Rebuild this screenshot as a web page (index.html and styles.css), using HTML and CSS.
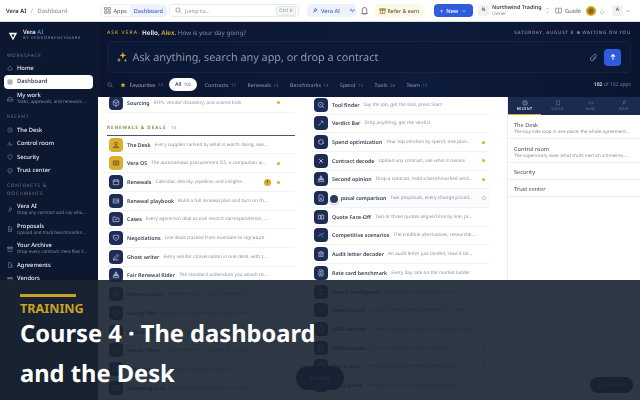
FILE: index.html
```html
<!DOCTYPE html>
<html lang="en">
<head>
<meta charset="utf-8">
<title>Vera AI Dashboard</title>
<link rel="stylesheet" href="styles.css">
</head>
<body>
<div class="app">
  <header class="topbar">
    <div class="crumbs"><b>Vera AI</b><i>/</i><span>Dashboard</span></div>
    <div class="seg">
      <span class="seg-item"><svg class="ic7" viewBox="0 0 12 12"><path d="M1 1h4v4H1zM7 1h4v4H7zM1 7h4v4H1zM7 7h4v4H7z" fill="none" stroke="#777" stroke-width="1.2"/></svg>Apps</span>
      <span class="seg-item on">Dashboard</span>
    </div>
    <div class="search"><svg class="ic7" viewBox="0 0 12 12"><circle cx="5" cy="5" r="3.6" fill="none" stroke="#777" stroke-width="1.1"/><path d="M8 8l3 3" stroke="#777" stroke-width="1.1"/></svg><span class="grow">Jump to...</span><kbd>Ctrl K</kbd></div>
    <div class="vera-pill"><svg class="ic7" viewBox="0 0 12 12"><path d="M2 10l4-4M6 2l1 2 2 1-2 1-1 2-1-2-2-1 2-1z" fill="none" stroke="#4a62cf" stroke-width="1.2"/></svg><span>Vera AI</span><svg class="ic7 pad" viewBox="0 0 12 12"><path d="M1 6h2l1-3 2 6 2-5 1 2h2" fill="none" stroke="#6b82dd" stroke-width="1.3"/></svg></div>
    <svg class="bell" viewBox="0 0 12 12"><path d="M3 9V5a3 3 0 0 1 6 0v4l1 1H2zM5 11h2" fill="none" stroke="#555" stroke-width="1"/></svg>
    <div class="refer"><svg class="ic7" viewBox="0 0 12 12"><path d="M2 5h8v6H2zM1 3h10v2H1zM6 3v8" fill="none" stroke="#9a7414" stroke-width="1.2"/></svg>Refer &amp; earn</div>
    <div class="new"><span>+</span>New<svg class="chev" viewBox="0 0 8 8"><path d="M2 3l2 2 2-2" fill="none" stroke="#cfdaff" stroke-width="1"/></svg></div>
    <span class="sq">N</span>
    <div class="org"><b>Northwind Trading</b><span>Owner</span></div>
    <svg class="updown" viewBox="0 0 8 12"><path d="M2 4l2-2 2 2M2 8l2 2 2-2" fill="none" stroke="#888" stroke-width="1"/></svg>
    <div class="guide"><svg class="ic7" viewBox="0 0 12 12"><path d="M1 2h4l1 1 1-1h4v8H7l-1 1-1-1H1zM6 3v7" fill="none" stroke="#666" stroke-width="1"/></svg>Guide</div>
    <span class="coin"></span>
    <svg class="hand" viewBox="0 0 12 12"><path d="M6 1v6M3 6a3.5 3.5 0 1 0 6 0" fill="none" stroke="#999" stroke-width="1"/></svg>
    <span class="sq a">A</span>
    <svg class="chev end" viewBox="0 0 8 8"><path d="M2 3l2 2 2-2" fill="none" stroke="#888" stroke-width="1"/></svg>
  </header>

  <div class="shell">
    <aside class="sidebar">
      <div class="brand">
        <svg class="logo" viewBox="0 0 12 12"><path d="M1 2h10L6 11z M4 4.2L6 8l2-3.8z" fill="#fff" fill-rule="evenodd"/></svg>
        <div><div class="brand-name">Vera <em>AI</em></div><div class="brand-sub">BY VENDORBENCHMARK</div></div>
      </div>
      <div class="sec first">WORKSPACE</div>
      <div class="nav"><svg viewBox="0 0 12 12"><path d="M2 6l4-4 4 4v4H2z"/></svg><b>Home</b></div>
      <div class="nav active"><svg viewBox="0 0 12 12"><path d="M2 2h8v8H2zM2 6h8M6 2v8"/></svg><b>Dashboard</b></div>
      <div class="nav two"><svg viewBox="0 0 12 12"><path d="M1 7l2-4h6l2 4v3H1zM1 7h3l1 1h2l1-1h3"/></svg><div><b>My work</b><small>Tasks, approvals, and renewals ...</small></div></div>
      <div class="sec">RECENT</div>
      <div class="nav"><svg viewBox="0 0 12 12"><circle cx="6" cy="6" r="4.5"/><path d="M6 3v3l2 1"/></svg><b>The Desk</b></div>
      <div class="nav"><svg viewBox="0 0 12 12"><path d="M1 7h2l2-5 2 8 2-4h2"/></svg><b>Control room</b></div>
      <div class="nav"><svg viewBox="0 0 12 12"><path d="M6 1l4 2v3c0 2.500-2 4-4 5-2-1-4-2.500-4-5V3z"/></svg><b>Security</b></div>
      <div class="nav"><svg viewBox="0 0 12 12"><path d="M6 1l4 2v3c0 2.500-2 4-4 5-2-1-4-2.500-4-5V3zM4 6l1.500 1.500L8 5"/></svg><b>Trust center</b></div>
      <div class="sec wrap">CONTRACTS &amp; DOCUMENTS</div>
      <div class="nav two"><svg viewBox="0 0 12 12"><path d="M2 10l4-4M7 1l1 2 2 1-2 1-1 2-1-2-2-1 2-1z"/></svg><div><b>Vera AI</b><small>Drop any contract and say wha...</small></div></div>
      <div class="nav two"><svg viewBox="0 0 12 12"><path d="M3 1h4l2 2v8H3zM4.500 6h3M4.500 8h3"/></svg><div><b>Proposals</b><small>Upload and track benchmarkin...</small></div></div>
      <div class="nav two"><svg viewBox="0 0 12 12"><path d="M1 2h10v2H1zM2 4v7h8V4zM5 6h2"/></svg><div><b>Your Archive</b><small>Drop every contract: Vera files t...</small></div></div>
      <div class="nav"><svg viewBox="0 0 12 12"><path d="M3 1h4l2 2v8H3zM7 6h3v5"/></svg><b>Agreements</b></div>
      <div class="nav"><svg viewBox="0 0 12 12"><path d="M2 5h8v6H2zM1 3h10v2H1z"/></svg><b>Vendors</b></div>
    </aside>

    <main class="main">
      <section class="hero">
        <div class="hero-top">
          <span class="ask-label">ASK VERA</span>
          <span class="hello"><b>Hello, <em>Alex.</em></b> How is your day going?</span>
          <span class="date">SATURDAY, AUGUST 8 &nbsp;<i></i> WAITING ON YOU</span>
        </div>
        <div class="prompt">
          <svg class="spark" viewBox="0 0 14 14"><path d="M8 1l1 3 3 1-3 1-1 3-1-3-3-1 3-1zM3.500 8l.7 1.800L6 10.500l-1.800.7L3.500 13l-.7-1.800L1 10.500l1.800-.7zM11 9l.5 1.500L13 11l-1.500.5L11 13l-.5-1.500L9 11l1.500-.5z" fill="#e0b12e"/></svg>
          <span class="prompt-text">Ask anything, search any app, or drop a contract</span>
          <svg class="clip" viewBox="0 0 12 12"><path d="M10 5.500L5.800 9.700a2.300 2.300 0 0 1-3.300-3.300l4.400-4.400a1.500 1.500 0 0 1 2.200 2.200L4.800 8.400" fill="none" stroke="#7d8698" stroke-width="1.200"/></svg>
          <span class="send"><svg viewBox="0 0 10 10"><path d="M5 8.500V2M2.500 4.500L5 2l2.500 2.500" fill="none" stroke="#fff" stroke-width="1.300"/></svg></span>
        </div>
        <div class="tabs">
          <svg class="tab-search" viewBox="0 0 12 12"><circle cx="5" cy="5" r="3.600" fill="none" stroke="#8994a8" stroke-width="1"/><path d="M8 8l3 3" stroke="#8994a8"/></svg>
          <span class="tab fav"><svg viewBox="0 0 12 12"><path d="M6 1l1.500 3.300 3.500.4-2.600 2.400.7 3.500L6 8.900l-3.100 1.700.7-3.500L1 4.700l3.500-.4z" fill="#dcae2c"/></svg>Favourites <sup>24</sup></span>
          <span class="tab all">All <sup>102</sup></span>
          <span class="tab">Contracts <sup>17</sup></span>
          <span class="tab">Renewals <sup>14</sup></span>
          <span class="tab">Benchmarks <sup>14</sup></span>
          <span class="tab">Spend <sup>14</sup></span>
          <span class="tab">Tools <sup>28</sup></span>
          <span class="tab">Team <sup>15</sup></span>
          <span class="count"><b>102</b> of 102 apps</span>
        </div>
      </section>

      <section class="content">
        <div class="col col-a">
          <div class="row"><span class="ico"><svg viewBox="0 0 12 12"><path d="M6 1l4 2.500v5L6 11 2 8.500v-5zM2 3.500L6 6l4-2.500M6 6v5"/></svg></span><b>Sourcing</b><span class="d">RFPs, vendor discovery, and scored bids</span><span class="dot"></span></div>
          <div class="group"><span>RENEWALS &amp; DEALS</span><small>14</small></div>
          <div class="row"><span class="ico gold"><svg viewBox="0 0 12 12"><circle cx="6" cy="4" r="2"/><path d="M2 10c0-3 8-3 8 0z"/></svg></span><b>The Desk</b><span class="d">Every supplier ranked by what is worth doing, wor...</span></div>
          <div class="row"><span class="ico gold"><svg viewBox="0 0 12 12"><path d="M2 3h8v6H2z"/><circle cx="6" cy="6" r="1.500"/></svg></span><b>Vera OS</b><span class="d">The autonomous procurement OS, a companion w...</span><span class="dot"></span></div>
          <div class="row"><span class="ico"><svg viewBox="0 0 12 12"><path d="M2 3h8v7H2zM2 5h8M4 1.500V3M8 1.500V3"/></svg></span><b>Renewals</b><span class="d">Calendar, density, pipeline, and insights</span><span class="badge">1</span><span class="dot"></span></div>
          <div class="row"><span class="ico"><svg viewBox="0 0 12 12"><path d="M2 3h8v6H2zM2 6h8M8 4.500L9.500 6"/></svg></span><b>Renewal playbook</b><span class="d">Build a full renewal plan and turn on th...</span></div>
          <div class="row"><span class="ico"><svg viewBox="0 0 12 12"><path d="M1.500 3h3.500l1 1.500h4.500V10h-9zM4 7h4"/></svg></span><b>Cases</b><span class="d">Every agent-run deal as one record: correspondence, ...</span></div>
          <div class="row"><span class="ico"><svg viewBox="0 0 12 12"><path d="M2 2h8v5l-4 3-4-3zM4 5l2 1.500L8 5"/></svg></span><b>Negotiations</b><span class="d">Live deals tracked from mandate to signature</span></div>
          <div class="row"><span class="ico"><svg viewBox="0 0 12 12"><path d="M2 10l1-3 5-5 2 2-5 5zM2 10.500h8"/></svg></span><b>Ghost writer</b><span class="d">Every vendor conversation in one desk, with t...</span></div>
          <div class="row"><span class="ico"><svg viewBox="0 0 12 12"><path d="M5 1.500h2V5H5zM3 5h6v2H3zM2 7h8v3H2z"/></svg></span><b>Fair Renewal Rider</b><span class="d">The standard addendum you attach to ...</span></div>
          <div class="row"><span class="ico"><svg viewBox="0 0 12 12"><path d="M2 3h8v6H2zM2 6h8"/></svg></span><b>Renegotiation</b><span class="d">Pick the contracts worth reopening</span></div>
          <div class="row"><span class="ico"><svg viewBox="0 0 12 12"><circle cx="6" cy="6" r="4"/></svg></span><b>Saving Plan</b><span class="d">Savings targets by vendor and by quarter</span></div>
          <div class="row"><span class="ico"><svg viewBox="0 0 12 12"><path d="M2 3h8v6H2z"/></svg></span><b>Walk-away</b><span class="d">Know your alternatives before you sit down</span></div>
          <div class="row"><span class="ico"><svg viewBox="0 0 12 12"><circle cx="6" cy="6" r="4"/></svg></span><b>Vendor Town</b><span class="d">Vendors and their standing at a glance</span></div>
          <div class="row"><span class="ico"><svg viewBox="0 0 12 12"><path d="M2 3h8v6H2z"/></svg></span><b>Price lock</b><span class="d">Caps and uplifts on every renewal</span></div>
          <div class="row"><span class="ico"><svg viewBox="0 0 12 12"><path d="M2 3h8v6H2z"/></svg></span><b>Renewing soon</b><span class="d">Everything that closes in ninety days</span></div>
        </div>

        <div class="col col-b">
          <div class="row"><span class="ico"><svg viewBox="0 0 12 12"><circle cx="5.500" cy="5.500" r="3.500"/><path d="M8 8l2.500 2.500M4.500 5.500h2"/></svg></span><b>Tool finder</b><span class="d">Say the job, get the tool, press Start</span></div>
          <div class="row"><span class="ico"><svg viewBox="0 0 12 12"><path d="M2 10l4.500-4.500M6 3l3 3M7 2l3 3"/></svg></span><b>Verdict Bar</b><span class="d">Drop anything, get the verdict</span></div>
          <div class="row"><span class="ico"><svg viewBox="0 0 12 12"><path d="M2.500 6a3.500 3.500 0 1 1 7 0 3.500 3.500 0 0 1-7 0zM1.500 4l2 .5M10.500 8l-2-.5"/></svg></span><b>Spend optimization</b><span class="d">Your top vendors by spend, one plan...</span><span class="dot"></span></div>
          <div class="row"><span class="ico"><svg viewBox="0 0 12 12"><path d="M3 3l6 6M9 3L3 9"/><circle cx="6" cy="6" r="1"/></svg></span><b>Contract decode</b><span class="d">Upload any contract, see what it means</span><span class="dot"></span></div>
          <div class="row"><span class="ico"><svg viewBox="0 0 12 12"><path d="M5 1.500h2V5H5zM3 5h6v2H3zM2 7h8v3H2z"/></svg></span><b>Second opinion</b><span class="d">Drop a contract, hold a benchmarked verd...</span><span class="dot"></span></div>
          <div class="row hover"><span class="ico"><svg viewBox="0 0 12 12"><path d="M3 1.500h4.500L9.500 3.500V10.500H3zM4.500 6h3M4.500 8h3"/></svg></span><b><span class="mask">Pro</span>posal comparison</b><span class="d">Two proposals, every change priced...</span><svg class="star" viewBox="0 0 12 12"><path d="M6 1.500l1.400 3 3.100.4-2.300 2.100.6 3.100L6 8.600l-2.800 1.500.6-3.100L1.500 4.900l3.100-.4z" fill="none" stroke="#98a0ad" stroke-width=".9"/></svg><span class="cursor"></span></div>
          <div class="row"><span class="ico"><svg viewBox="0 0 12 12"><path d="M2 3h3.500v6H2zM6.500 3H10v6H6.500z"/></svg></span><b>Quote Face-Off</b><span class="d">Two or three quotes aligned line by line, pl...</span></div>
          <div class="row"><span class="ico"><svg viewBox="0 0 12 12"><path d="M2 8l2.500-2.500M5.500 6l2 0M7.500 5L10 3M4 3l1 1M8 8l1 1"/></svg></span><b>Competitive scenarios</b><span class="d">The credible alternatives, researche...</span></div>
          <div class="row"><span class="ico"><svg viewBox="0 0 12 12"><path d="M6 2l4 2.500H2zM3 5v4M6 5v4M9 5v4M2 9.500h8"/></svg></span><b>Audit letter decoder</b><span class="d">An audit letter just landed, read it be...</span></div>
          <div class="row"><span class="ico"><svg viewBox="0 0 12 12"><path d="M3 1.500h6v9H3zM4.500 4h3M4.500 6h3M4.500 8h3"/></svg></span><b>Rate card benchmark</b><span class="d">Every day rate on the market ladder</span></div>
          <div class="row"><span class="ico"><svg viewBox="0 0 12 12"><path d="M6 1.500v9M3 4l3-2.500L9 4M3 8l3 2.500L9 8"/></svg></span><b>Spend Intelligence</b><span class="d">Search and slice all of your spend</span></div>
          <div class="row"><span class="ico"><svg viewBox="0 0 12 12"><path d="M2 6l3 3 5-6"/></svg></span><b>Speed Check</b><span class="d">A quick first read of any quote or order form</span></div>
          <div class="row"><span class="ico"><svg viewBox="0 0 12 12"><path d="M3 1.500h6v9H3z"/></svg></span><b>SOW Decoder</b><span class="d">Scope, rates and risks of any statement of work</span><svg class="star" viewBox="0 0 12 12"><path d="M6 1.500l1.400 3 3.100.4-2.300 2.100.6 3.100L6 8.600l-2.800 1.500.6-3.100L1.500 4.900l3.100-.4z" fill="none" stroke="#98a0ad" stroke-width=".9"/></svg></div>
          <div class="row"><span class="ico"><svg viewBox="0 0 12 12"><path d="M3 1.500h6v9H3z"/></svg></span><b>MSA Decoder</b><span class="d">Clauses that matter, in plain words</span><svg class="star" viewBox="0 0 12 12"><path d="M6 1.500l1.400 3 3.100.4-2.300 2.100.6 3.100L6 8.600l-2.800 1.500.6-3.100L1.500 4.900l3.100-.4z" fill="none" stroke="#98a0ad" stroke-width=".9"/></svg></div>
          <div class="row"><span class="ico"><svg viewBox="0 0 12 12"><circle cx="6" cy="6" r="4"/></svg></span><b>Quick scan</b><span class="d">Drop a contract and see the flagged clauses</span><svg class="star" viewBox="0 0 12 12"><path d="M6 1.500l1.400 3 3.100.4-2.300 2.100.6 3.100L6 8.600l-2.800 1.500.6-3.100L1.500 4.900l3.100-.4z" fill="none" stroke="#98a0ad" stroke-width=".9"/></svg></div>
          <div class="row"><span class="ico"><svg viewBox="0 0 12 12"><circle cx="6" cy="6" r="4"/></svg></span><b>Ask a quote</b><span class="d">Request pricing from shortlisted vendors</span></div>
        </div>

        <aside class="recent">
          <div class="rtabs">
            <span class="rtab on"><svg viewBox="0 0 12 12"><circle cx="6" cy="6" r="4.500"/><path d="M6 3.500V6l1.500 1"/></svg>RECENT</span>
            <span class="rtab"><svg viewBox="0 0 12 12"><path d="M3 1.500h6v9L6 8.500l-3 2z"/></svg>SAVED</span>
            <span class="rtab"><svg viewBox="0 0 12 12"><path d="M1 6h3M8 6h3M4 3v6M8 3v6"/></svg>WIRE</span>
            <span class="rtab"><svg viewBox="0 0 12 12"><path d="M2 10l4-4M7 1l1 2 2 1-2 1-1 2-1-2-2-1 2-1z"/></svg>NOW</span>
          </div>
          <div class="ritem"><b>The Desk</b><small>The buy-side loop in one place: the whole agreement...</small></div>
          <div class="ritem"><b>Control room</b><small>The supervisory view: what shuts next on a timeline,...</small></div>
          <div class="ritem"><b>Security</b></div>
          <div class="ritem"><b>Trust center</b></div>
        </aside>

        <span class="float-tool">Tooling</span>
        <span class="float-ask"><svg viewBox="0 0 12 12"><circle cx="6" cy="6" r="4" fill="none" stroke="#3a5070"/></svg>Ask Vera</span>
      </section>
    </main>
  </div>

  <div class="training">
    <span class="bar"></span>
    <div class="kicker">TRAINING</div>
    <h1>Course 4 · The dashboard and the Desk</h1>
  </div>
</div>
</body>
</html>
```

FILE: styles.css
```css
* { box-sizing: border-box; }
html, body { margin: 0; padding: 0; }
body { font-family: "Noto Sans", "Open Sans", sans-serif; background: #fff; text-rendering: geometricPrecision; }
.app { position: relative; width: 640px; height: 400px; overflow: hidden; display: flex; flex-direction: column; }

/* the reference is a soft video frame */
.topbar, .shell { filter: blur(.35px); }

/* top bar */
.topbar { height: 22px; flex: none; display: flex; align-items: center; padding: 0 0 0 6px; background: #fff; border-bottom: 1px solid #d9dde3; font-size: 5.600px; color: #4b5563; white-space: nowrap; }
.ic7 { width: 7px; height: 7px; flex: none; }
.crumbs { width: 94px; display: flex; gap: 4.500px; font-size: 5.800px; }
.crumbs b { font-weight: 600; color: #1f2937; }
.crumbs i { font-style: normal; color: #9ca3af; }
.crumbs span { color: #7b8490; }
.seg { width: 63px; height: 13px; display: flex; align-items: center; gap: 3px; padding-left: 3px; border: 1px solid #f0f1f4; border-radius: 4px; }
.seg-item { display: flex; align-items: center; gap: 2.500px; }
.seg-item.on { height: 12px; padding: 0 4px; background: #edf1fb; color: #4a5fc1; font-weight: 500; border-radius: 3px; line-height: 12px; }
.search { width: 130px; height: 13px; margin-left: 6px; padding: 0 2px 0 5px; display: flex; align-items: center; gap: 3px; border: 1px solid #e7e9ed; border-radius: 4px; color: #8a93a0; }
.grow { flex: 1; }
kbd { font: 4.500px "Noto Sans", sans-serif; letter-spacing: .4px; padding: 1px 2px; background: #f4f5f7; border: 1px solid #e5e7eb; border-radius: 2px; color: #7b8490; }
.vera-pill { width: 49px; height: 13px; margin-left: 8px; padding-left: 5px; display: flex; align-items: center; gap: 2px; background: #eef2fb; border-radius: 4px; color: #4a62cf; font-weight: 500; }
.pad { margin-left: 7px; }
.bell { width: 9px; height: 9px; margin-left: 4px; }
.refer { width: 51px; height: 13px; margin-left: 5px; padding-left: 4.500px; display: flex; align-items: center; gap: 2px; background: #fcf7e7; border-radius: 6px; color: #5f5a45; font-size: 5.300px; font-weight: 500; }
.new { width: 39px; height: 13px; margin-left: 9px; padding-left: 6px; display: flex; align-items: center; gap: 3px; background: #2f5bdd; border-radius: 4px; color: #e8eeff; font-weight: 600; }
.chev { width: 6px; height: 6px; }
.chev.end { margin-left: 2px; }
.sq { width: 11px; height: 11px; margin-left: 5px; background: #f0f1f4; border-radius: 3px; text-align: center; font-size: 5px; line-height: 11px; color: #555; font-weight: 600; flex: none; }
.org { margin-left: 3px; width: 52px; display: flex; flex-direction: column; line-height: 6.500px; }
.org b { font-weight: 600; color: #374151; font-size: 5.400px; }
.org span { font-size: 4.500px; color: #8a93a0; }
.updown { width: 5px; height: 7px; margin-left: 1px; }
.guide { margin-left: 5px; display: flex; align-items: center; gap: 2px; color: #555e6b; width: 30px; font-size: 5.800px; }
.guide .ic7 { margin-right: 1px; }
.coin { width: 10px; height: 10px; margin-left: 1px; border-radius: 50%; background: radial-gradient(#8a6a10 25%, #d8aa2a 60%); flex: none; }
.hand { width: 6px; height: 6px; margin-left: 3px; }
.sq.a { margin-left: 7px; }

/* shell */
.shell { flex: 1; display: flex; min-height: 0; }
.sidebar { width: 98px; flex: none; background: #0c1730; padding: 6px 5px 0 4px; color: #e8ebf1; overflow: hidden; }
.brand { display: flex; align-items: center; gap: 3px; height: 15px; padding-left: 4px; }
.logo { width: 10px; height: 10px; margin-right: 2px; }
.brand-name { font-size: 5.800px; font-weight: 600; line-height: 7px; color: #f0f2f6; }
.brand-name em { font-style: normal; color: #5c7ce0; }
.brand-sub { font-size: 3.900px; letter-spacing: .7px; color: #8390a6; line-height: 6px; white-space: nowrap; }
.sec { font-size: 4.700px; letter-spacing: .8px; color: #6d7a91; height: 7px; line-height: 7px; margin: 6px 0 2px 3px; }
.sec.first { margin-top: 10px; margin-bottom: 1.250px; }
.sec.wrap { height: 16px; line-height: 8px; width: 60px; margin-top: 5px; margin-bottom: 1.750px; }
.nav { display: flex; align-items: center; gap: 4px; height: 13.500px; padding-left: 3px; font-size: 5.800px; white-space: nowrap; overflow: hidden; }
.nav b { font-weight: 500; display: block; line-height: 7px; }
.nav svg { width: 6px; height: 6px; flex: none; fill: none; stroke: #8a96ab; stroke-width: 1; }
.nav small { display: block; font-size: 4.500px; line-height: 6px; color: #7d899e; }
.nav.two { height: 19.500px; }
.nav.active { background: #fff; border-radius: 4px; color: #1f2a3d; height: 14px; }
.nav.active svg { stroke: #45505f; }

/* hero */
.main { flex: 1; min-width: 0; display: flex; flex-direction: column; }
.hero { height: 75px; flex: none; background: linear-gradient(90deg, #0b1530, #0d1b3c 60%, #0a1530); padding: 5px 9px 0; color: #fff; }
.hero-top { display: flex; align-items: center; height: 11px; white-space: nowrap; }
.ask-label { font-size: 4.800px; letter-spacing: 1.100px; color: #c69f2c; font-weight: 600; margin-right: 4px; }
.hello { font-size: 6.300px; color: #7f8ba0; flex: 1; }
.hello b { font-weight: 600; color: #f1f3f7; }
.hello em { font-style: normal; color: #d7ab2d; }
.date { font-size: 4.700px; letter-spacing: .6px; font-weight: 600; color: #78849a; }
.date i { display: inline-block; width: 3px; height: 3px; background: #78849a; border-radius: 50%; }
.prompt { height: 32px; margin-top: 3px; display: flex; align-items: center; padding: 0 9px 0 8px; border: 1px solid #16223e; border-radius: 5px; background: #0c1936; }
.spark { width: 12px; height: 12px; flex: none; margin-right: 4.500px; }
.prompt-text { font-size: 10.850px; color: #8b96a9; flex: 1; white-space: nowrap; }
.clip { width: 9px; height: 9px; margin-right: 6px; }
.send { width: 17px; height: 17px; border-radius: 4px; background: #2f5bdd; display: flex; align-items: center; justify-content: center; }
.send svg { width: 8px; height: 8px; }
.tabs { display: flex; align-items: center; height: 13px; margin-top: 5px; font-size: 5.200px; color: #7f8ba0; white-space: nowrap; }
.tab-search { width: 6px; height: 6px; margin: 0 7px 0 0; }
.tab { display: flex; align-items: baseline; gap: 2.500px; margin-right: 11.500px; font-weight: 500; }
.tab sup { font-size: 4.400px; color: #5e6a80; font-weight: 400; vertical-align: baseline; line-height: 0; position: static; }
.tab.fav { color: #8c97aa; align-items: center; margin-right: 6px; }
.tab.fav svg { width: 6px; height: 6px; margin-right: 1px; }
.tab.all { background: #fff; color: #1f2a3d; height: 13px; padding: 0 6px; border-radius: 7px; line-height: 13px; align-items: center; margin-right: 7.500px; }
.count { margin-left: auto; font-size: 5px; color: #6f7b90; }
.count b { color: #dfe3ea; font-weight: 600; }

/* content */
.content { position: relative; flex: 1; min-height: 0; background: #fff; display: flex; overflow: hidden; padding-left: 9px; }
.col { flex: none; }
.col-a { width: 188px; margin-top: -3.200px; }
.col-b { width: 178px; margin-left: 17px; margin-top: -1.200px; }
.row { position: relative; height: 18.700px; display: flex; align-items: center; gap: 4px; border-bottom: 1px solid #f1f2f4; padding-left: 2px; white-space: nowrap; font-size: 5.300px; }
.col-a .row { padding-right: 10px; }
.row b { font-weight: 600; color: #3b4352; }
.row .d { font-size: 4.700px; color: #8a919c; flex: 1; overflow: hidden; }
.ico { width: 14px; height: 14px; flex: none; border-radius: 4px; background: #1c2c55; display: flex; align-items: center; justify-content: center; }
.ico svg { width: 8px; height: 8px; fill: none; stroke: #c7d0e2; stroke-width: 1; }
.ico.gold { background: #d9ae2e; }
.ico.gold svg { stroke: #4d3c0c; }
.dot { width: 3px; height: 3px; border-radius: 50%; background: #dcae2c; margin-right: 5px; flex: none; }
.badge { width: 7px; height: 7px; border-radius: 50%; background: #d9ae2e; color: #3b2d05; font-size: 4px; font-weight: 700; text-align: center; line-height: 7px; margin-right: 2px; flex: none; }
.group { height: 19.800px; display: flex; align-items: flex-end; gap: 4px; padding-bottom: 3.500px; margin-top: 3.500px; border-bottom: 1px solid #4c5464; font-size: 4.700px; letter-spacing: .9px; font-weight: 600; color: #8f7a38; }
.group small { font-size: 4.300px; color: #8a919c; font-weight: 400; letter-spacing: 0; margin-left: 1px; }
.hover { background: #fbfcfd; }
.star { width: 6px; height: 6px; margin-right: 3px; flex: none; }
.mask { visibility: hidden; }
.cursor { position: absolute; left: 17.500px; top: 5.500px; width: 8px; height: 8px; border-radius: 50%; background: #2a3a5c; box-shadow: 0 0 0 1px #fff, 0 1px 2px 1px rgba(0,0,0,.25); }

/* recent panel */
.recent { width: 133px; margin-left: 17px; flex: none; border-left: 1px solid #eceef1; color: #475160; }
.rtabs { height: 18px; display: flex; background: #1b2b4f; }
.rtab { flex: 1; display: flex; flex-direction: column; align-items: center; justify-content: center; font-size: 3.700px; letter-spacing: .3px; color: #68758f; gap: 1px; }
.rtab svg { width: 6px; height: 6px; fill: none; stroke: #6d7a94; stroke-width: 1; }
.rtab.on { color: #dfe3ea; font-weight: 600; border-bottom: 1px solid #d9ae2e; }
.rtab.on svg { stroke: #dfe3ea; }
.ritem { padding: 5.500px 6px 0; border-bottom: 1px solid #eceef1; height: 24px; }
.ritem:nth-child(n+4) { height: 17px; padding-top: 5px; }
.ritem b { display: block; font-size: 5.600px; font-weight: 400; line-height: 8px; color: #3f4958; }
.ritem small { display: block; font-size: 4.500px; line-height: 7px; color: #8a919c; white-space: nowrap; overflow: hidden; }
.float-tool { position: absolute; left: 198px; top: 269px; width: 48px; height: 24px; border-radius: 12px; background: #0e1d3d; color: #aab3c2; font-size: 6px; text-align: center; line-height: 24px; }
.float-ask { position: absolute; right: 7px; top: 280px; width: 43px; height: 16px; border-radius: 8px; background: #0e1d3d; color: #aab3c2; font-size: 5px; display: flex; align-items: center; justify-content: center; gap: 2px; }
.float-ask svg { width: 6px; height: 6px; }

/* training overlay */
.training { position: absolute; left: 0; right: 0; bottom: 0; height: 120px; padding: 14px 20px 0; background: rgba(25, 35, 50, .91); color: #fff; }
.bar { display: block; width: 56px; height: 3px; background: #c9a227; }
.kicker { font-size: 12.600px; line-height: 18px; font-weight: 700; color: #c9a227; margin-top: 3px; }
h1 { margin: -4px 0 0; width: 310px; font-size: 23.700px; line-height: 39.500px; font-weight: 700; color: #fff; }
```
